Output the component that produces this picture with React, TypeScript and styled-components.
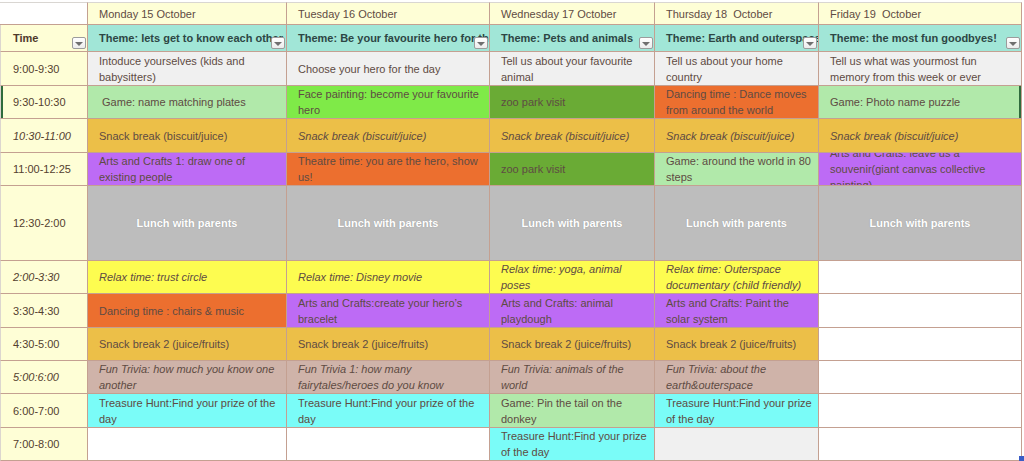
import React from 'react';
import styled, { createGlobalStyle, css } from 'styled-components';

const GlobalStyle = createGlobalStyle`
  html, body { margin: 0; padding: 0; background: #ffffff; }
  body {
    font-family: "Liberation Sans", Arial, Helvetica, sans-serif;
    font-size: 11px;
    overflow: hidden;
  }
`;

const LINE = '#c4a091';
const COLS = '88px 199px 203px 165px 164px 203px';

const BG = {
  white: '#ffffff',
  cream: '#fefed6',
  teal: '#a1e6d7',
  gray: '#f0f0f0',
  lime: '#b1e9aa',
  bright: '#7fea48',
  moss: '#6aab35',
  orange: '#ec6f2f',
  snack: '#ecbf48',
  purple: '#bd6bf5',
  lunch: '#bdbdbd',
  yellow: '#fdfc50',
  trivia: '#cfb3a9',
  cyan: '#7afcf8',
} as const;

type Tone = keyof typeof BG;

const Sheet = styled.div`
  position: relative;
  width: 1024px;
  height: 461px;
  overflow: hidden;
  padding-top: 2px;
  box-sizing: border-box;
  background: #ffffff;
`;

const Row = styled.div<{ $h: number; $selected?: boolean }>`
  display: grid;
  grid-template-columns: ${COLS};
  width: 1022px;
  height: ${(p) => p.$h}px;
  ${(p) =>
    p.$selected &&
    css`
      & > :first-child { box-shadow: inset 2px 0 0 #2f6b3c; }
      & > :last-child { box-shadow: inset -2px 0 0 #2f6b3c; }
    `}
`;

const BaseCell = styled.div<{ $tone: Tone; $italic?: boolean }>`
  position: relative;
  display: flex;
  align-items: center;
  box-sizing: border-box;
  min-width: 0;
  overflow: hidden;
  background: ${(p) => BG[p.$tone]};
  border-right: 1px solid ${LINE};
  border-bottom: 1px solid ${LINE};
  padding: 0 4px 0 11px;
  line-height: 16px;
  color: #5e4b43;
  font-style: ${(p) => (p.$italic ? 'italic' : 'normal')};
`;

const HeadCell = styled(BaseCell)`
  border-top: 1px solid #d9d6d2;
  white-space: pre;
  color: #5e4b43;
`;

const TimeCell = styled(BaseCell)`
  padding-left: 12px;
  color: #54402f;
  border-left: 1px solid #dcd6cf;
`;

const TimeHeadCell = styled(TimeCell)`
  font-weight: bold;
  color: #4e3a2c;
`;

const ThemeCell = styled(BaseCell)`
  font-weight: bold;
  color: #2d4644;
  white-space: nowrap;
  padding-right: 0;
`;

const ActivityCell = styled(BaseCell)``;

const LunchCell = styled(BaseCell)`
  justify-content: center;
  padding: 0;
  font-weight: bold;
  color: #ffffff;
  text-shadow: 0 0 1px rgba(90, 90, 90, 0.45);
`;

const CellText = styled.span`
  display: block;
  min-width: 0;
`;

const Drop = styled.span`
  position: absolute;
  right: 1px;
  bottom: 2px;
  width: 14px;
  height: 12px;
  box-sizing: border-box;
  border: 1px solid #9c9c9c;
  border-radius: 2px;
  background: linear-gradient(#ffffff, #ececec);
  display: flex;
  align-items: center;
  justify-content: center;
  &::after {
    content: '';
    margin-top: 1px;
    border-left: 4px solid transparent;
    border-right: 4px solid transparent;
    border-top: 4px solid #6f6f6f;
  }
`;

const Handle = styled.span`
  position: absolute;
  right: 0;
  bottom: 0;
  width: 5px;
  height: 5px;
  background: #3a5cc6;
`;

type Act = { t?: string; c: Tone; i?: boolean };

type Slot = { time: string; h: number; ti?: boolean; sel?: boolean; lunch?: boolean; acts: Act[] };

const days = [
  'Monday 15 October',
  'Tuesday 16 October',
  'Wednesday 17 October',
  'Thursday 18  October',
  'Friday 19  October',
];

const themes = [
  'Theme: lets get to know each other',
  'Theme: Be your favourite hero for the day',
  'Theme: Pets and animals',
  'Theme: Earth and outerspace',
  'Theme: the most fun goodbyes!',
];

const TH = 'Treasure Hunt:Find your prize of the day';

const slots: Slot[] = [
  {
    time: '9:00-9:30',
    h: 34,
    acts: [
      { t: 'Intoduce yourselves (kids and babysitters)', c: 'gray' },
      { t: 'Choose your hero for the day', c: 'gray' },
      { t: 'Tell us about your favourite animal', c: 'gray' },
      { t: 'Tell us about your home country', c: 'gray' },
      { t: 'Tell us what was yourmost fun memory from this week or ever', c: 'gray' },
    ],
  },
  {
    time: '9:30-10:30',
    h: 33,
    sel: true,
    acts: [
      { t: '\u00a0Game: name matching plates', c: 'lime' },
      { t: 'Face painting: become your favourite hero', c: 'bright' },
      { t: 'zoo park visit', c: 'moss' },
      { t: 'Dancing time : Dance moves from around the world', c: 'orange' },
      { t: 'Game: Photo name puzzle', c: 'lime' },
    ],
  },
  {
    time: '10:30-11:00',
    h: 34,
    ti: true,
    acts: [
      { t: 'Snack break (biscuit/juice)', c: 'snack' },
      { t: 'Snack break (biscuit/juice)', c: 'snack', i: true },
      { t: 'Snack break (biscuit/juice)', c: 'snack', i: true },
      { t: 'Snack break (biscuit/juice)', c: 'snack', i: true },
      { t: 'Snack break (biscuit/juice)', c: 'snack', i: true },
    ],
  },
  {
    time: '11:00-12:25',
    h: 33,
    acts: [
      { t: 'Arts and Crafts 1: draw one of existing people', c: 'purple' },
      { t: 'Theatre time: you are the hero, show us!', c: 'orange' },
      { t: 'zoo park visit', c: 'moss' },
      { t: 'Game: around the world in 80 steps', c: 'lime' },
      { t: 'Arts and Crafts: leave us a souvenir(giant canvas collective painting)', c: 'purple' },
    ],
  },
  {
    time: '12:30-2:00',
    h: 75,
    lunch: true,
    acts: Array.from({ length: 5 }, () => ({ t: 'Lunch with parents', c: 'lunch' as Tone })),
  },
  {
    time: '2:00-3:30',
    h: 33,
    ti: true,
    acts: [
      { t: 'Relax time: trust circle', c: 'yellow', i: true },
      { t: 'Relax time: Disney movie', c: 'yellow', i: true },
      { t: 'Relax time: yoga, animal poses', c: 'yellow', i: true },
      { t: 'Relax time: Outerspace documentary (child friendly)', c: 'yellow', i: true },
      { c: 'white' },
    ],
  },
  {
    time: '3:30-4:30',
    h: 34,
    acts: [
      { t: 'Dancing time : chairs & music', c: 'orange' },
      { t: 'Arts and Crafts:create your hero\u2019s bracelet', c: 'purple' },
      { t: 'Arts and Crafts: animal playdough', c: 'purple' },
      { t: 'Arts and Crafts: Paint the solar system', c: 'purple' },
      { c: 'white' },
    ],
  },
  {
    time: '4:30-5:00',
    h: 33,
    acts: [
      { t: 'Snack break 2 (juice/fruits)', c: 'snack' },
      { t: 'Snack break 2 (juice/fruits)', c: 'snack' },
      { t: 'Snack break 2 (juice/fruits)', c: 'snack' },
      { t: 'Snack break 2 (juice/fruits)', c: 'snack' },
      { c: 'white' },
    ],
  },
  {
    time: '5:00:6:00',
    h: 33,
    ti: true,
    acts: [
      { t: 'Fun Trivia: how much you know one another', c: 'trivia', i: true },
      { t: 'Fun Trivia 1: how many fairytales/heroes do you know', c: 'trivia', i: true },
      { t: 'Fun Trivia: animals of the world', c: 'trivia', i: true },
      { t: 'Fun Trivia: about the earth&outerspace', c: 'trivia', i: true },
      { c: 'white' },
    ],
  },
  {
    time: '6:00-7:00',
    h: 34,
    acts: [
      { t: TH, c: 'cyan' },
      { t: TH, c: 'cyan' },
      { t: 'Game: Pin the tail on the donkey', c: 'lime' },
      { t: TH, c: 'cyan' },
      { c: 'white' },
    ],
  },
  {
    time: '7:00-8:00',
    h: 33,
    acts: [
      { c: 'white' },
      { c: 'white' },
      { t: TH, c: 'cyan' },
      { c: 'gray' },
      { c: 'white' },
    ],
  },
];

export default function App() {
  return (
    <>
      <GlobalStyle />
      <Sheet>
        <Row $h={23}>
          <HeadCell $tone="white" />
          {days.map((d) => (
            <HeadCell key={d} $tone="cream">
              <CellText>{d}</CellText>
            </HeadCell>
          ))}
        </Row>
        <Row $h={27}>
          <TimeHeadCell $tone="cream">
            <CellText>Time</CellText>
            <Drop />
          </TimeHeadCell>
          {themes.map((t) => (
            <ThemeCell key={t} $tone="teal">
              <CellText>{t}</CellText>
              <Drop />
            </ThemeCell>
          ))}
        </Row>
        {slots.map((s) => (
          <Row key={s.time} $h={s.h} $selected={s.sel}>
            <TimeCell $tone="cream" $italic={s.ti}>
              <CellText>{s.time}</CellText>
            </TimeCell>
            {s.acts.map((a, idx) =>
              s.lunch ? (
                <LunchCell key={idx} $tone={a.c}>
                  <CellText>{a.t}</CellText>
                </LunchCell>
              ) : (
                <ActivityCell key={idx} $tone={a.c} $italic={a.i}>
                  {a.t && <CellText>{a.t}</CellText>}
                </ActivityCell>
              )
            )}
          </Row>
        ))}
        <Handle />
      </Sheet>
    </>
  );
}
